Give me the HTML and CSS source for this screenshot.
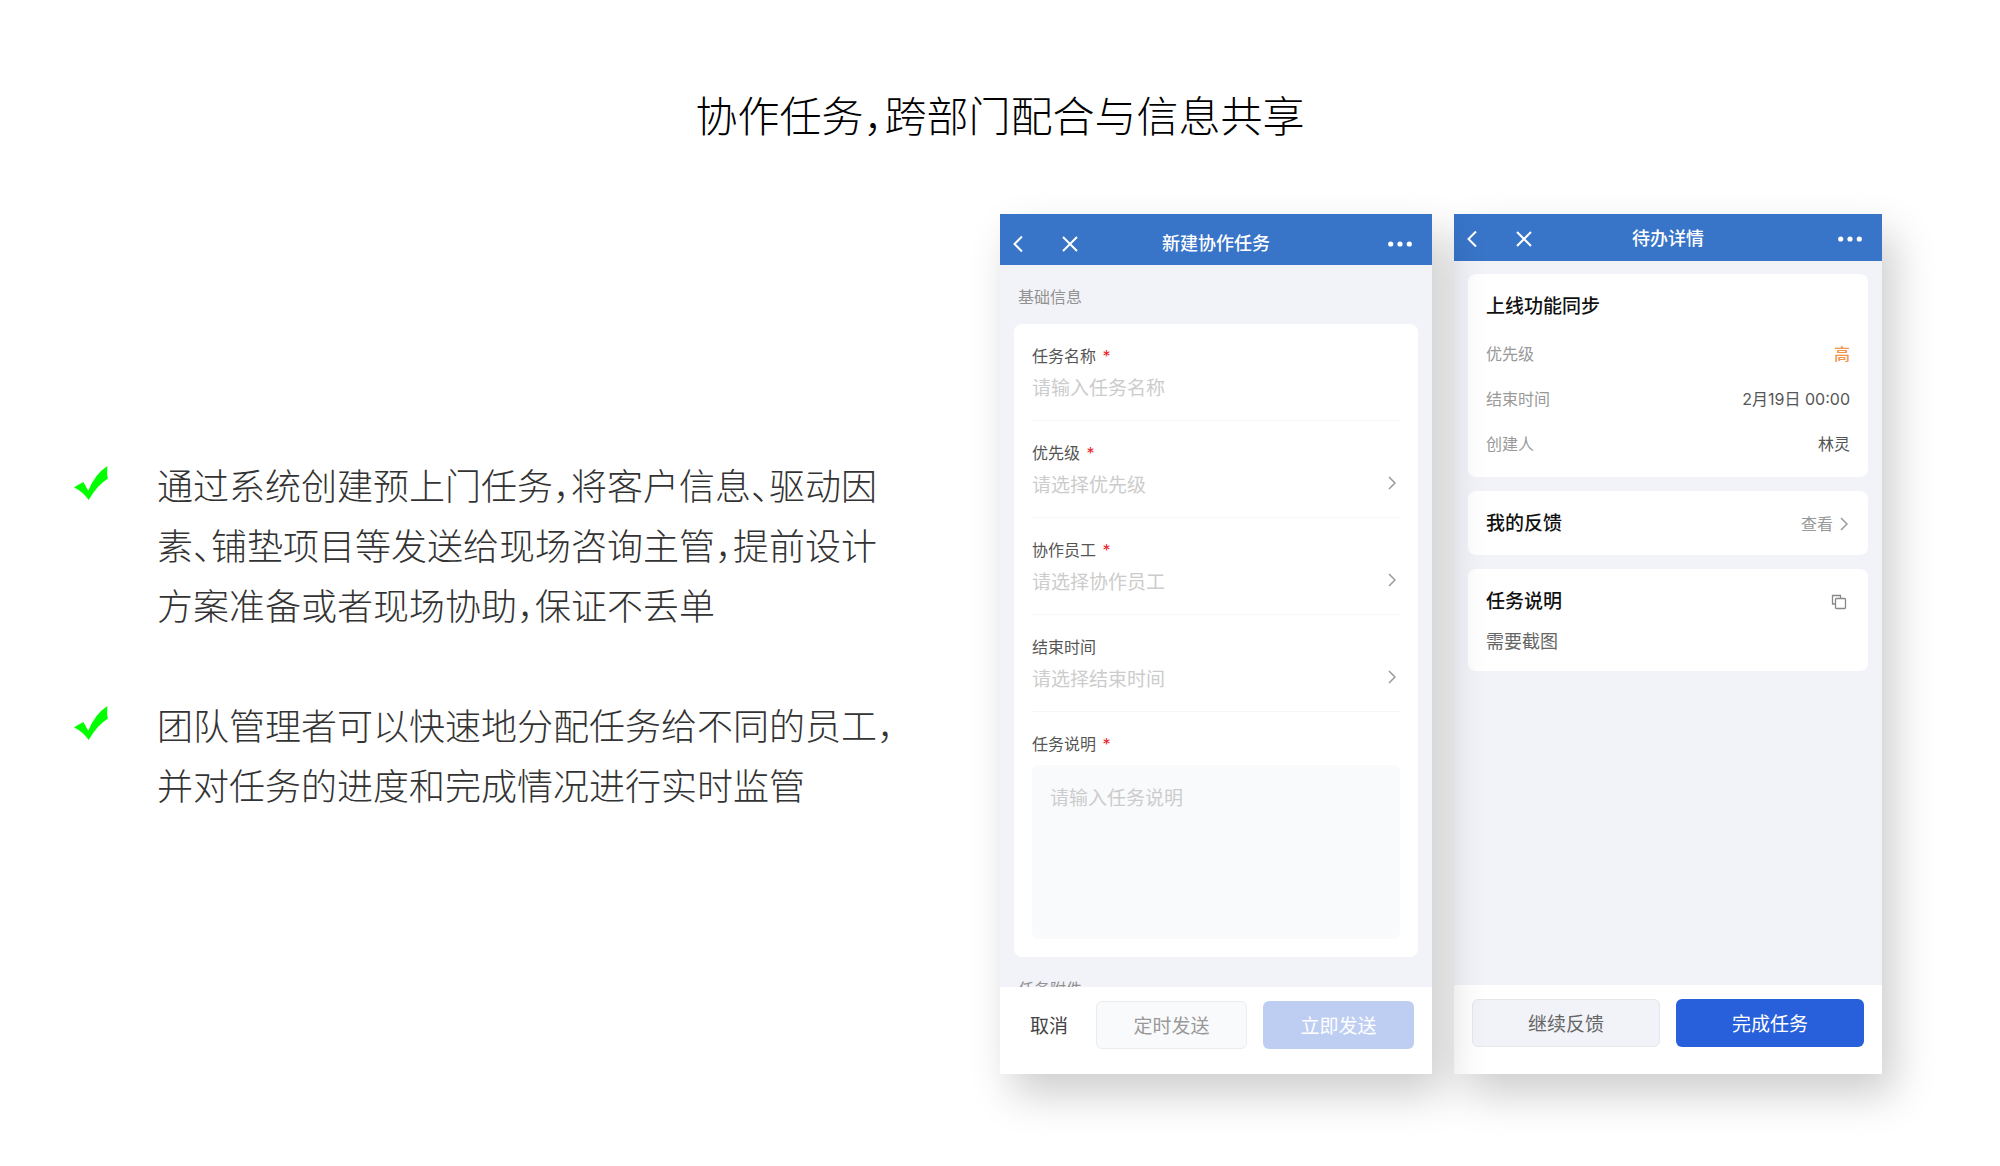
FILE: index.html
```html
<!DOCTYPE html>
<html lang="zh-CN">
<head>
    <meta charset="UTF-8">
    <title>协作任务</title>
    <meta name="viewport" content="width=device-width, initial-scale=1.0">
    <link rel="stylesheet" href="styles.css">
</head>
<body>

<h1 class="page-title">协作任务，跨部门配合与信息共享</h1>

<main class="content">
    <ul class="features">
        <li class="feature">
            <svg class="check" viewBox="0 0 34 34" aria-hidden="true"><path d="M0 21.300L9.300 16L14.300 24.700Q21 8 33.500 0Q32.500 7 33.800 12.700Q23 19 14.700 34Q9 26 0 21.300Z"/></svg>
            <p>通过系统创建预上门任务，将客户信息、驱动因素、铺垫项目等发送给现场咨询主管，提前设计方案准备或者现场协助，保证不丢单</p>
        </li>
        <li class="feature">
            <svg class="check" viewBox="0 0 34 34" aria-hidden="true"><path d="M0 21.300L9.300 16L14.300 24.700Q21 8 33.500 0Q32.500 7 33.800 12.700Q23 19 14.700 34Q9 26 0 21.300Z"/></svg>
            <p>团队管理者可以快速地分配任务给不同的员工，并对任务的进度和完成情况进行实时监管</p>
        </li>
    </ul>

    <div class="phones">
        <!-- New task form -->
        <form class="phone phone-front" action="#">
            <header class="navbar navbar-tall">
                <div class="nav-left">
                    <button type="button" class="icon-button" aria-label="返回"><svg width="10" height="18" viewBox="0 0 10 18"><path d="M9 1.500L1.500 9L9 16.500"/></svg></button>
                    <button type="button" class="icon-button" aria-label="关闭"><svg width="16" height="16" viewBox="0 0 16 16"><path d="M1 1L15 15M15 1L1 15"/></svg></button>
                </div>
                <h2 class="nav-title">新建协作任务</h2>
                <button type="button" class="icon-button nav-more" aria-label="更多"><svg class="dots" width="24" height="6" viewBox="0 0 24 6"><circle cx="2.700" cy="3" r="2.600"/><circle cx="12" cy="3" r="2.600"/><circle cx="21.300" cy="3" r="2.600"/></svg></button>
            </header>

            <div class="screen">
                <h3 class="section-label">基础信息</h3>
                <div class="card form-card">
                    <div class="field">
                        <label for="taskName">任务名称 <span class="required">*</span></label>
                        <input type="text" id="taskName" placeholder="请输入任务名称">
                    </div>
                    <div class="field">
                        <label for="priority">优先级 <span class="required">*</span></label>
                        <div class="picker">
                            <select id="priority"><option>请选择优先级</option></select>
                            <svg class="chevron" viewBox="0 0 8 14"><path d="M1 1L7 7L1 13"/></svg>
                        </div>
                    </div>
                    <div class="field">
                        <label for="staff">协作员工 <span class="required">*</span></label>
                        <div class="picker">
                            <select id="staff"><option>请选择协作员工</option></select>
                            <svg class="chevron" viewBox="0 0 8 14"><path d="M1 1L7 7L1 13"/></svg>
                        </div>
                    </div>
                    <div class="field">
                        <label for="endTime">结束时间</label>
                        <div class="picker">
                            <input type="text" id="endTime" placeholder="请选择结束时间" readonly>
                            <svg class="chevron" viewBox="0 0 8 14"><path d="M1 1L7 7L1 13"/></svg>
                        </div>
                    </div>
                    <div class="field field-note">
                        <label for="taskNote">任务说明 <span class="required">*</span></label>
                        <textarea id="taskNote" placeholder="请输入任务说明"></textarea>
                    </div>
                </div>
                <h3 class="section-label">任务附件</h3>
            </div>

            <footer class="actions actions-three">
                <button type="button" class="btn btn-text">取消</button>
                <button type="button" class="btn btn-light">定时发送</button>
                <button type="button" class="btn btn-pale">立即发送</button>
            </footer>
        </form>

        <!-- Task detail -->
        <section class="phone">
            <header class="navbar">
                <div class="nav-left">
                    <button type="button" class="icon-button" aria-label="返回"><svg width="10" height="18" viewBox="0 0 10 18"><path d="M9 1.500L1.500 9L9 16.500"/></svg></button>
                    <button type="button" class="icon-button" aria-label="关闭"><svg width="16" height="16" viewBox="0 0 16 16"><path d="M1 1L15 15M15 1L1 15"/></svg></button>
                </div>
                <h2 class="nav-title">待办详情</h2>
                <button type="button" class="icon-button nav-more" aria-label="更多"><svg class="dots" width="24" height="6" viewBox="0 0 24 6"><circle cx="2.700" cy="3" r="2.600"/><circle cx="12" cy="3" r="2.600"/><circle cx="21.300" cy="3" r="2.600"/></svg></button>
            </header>

            <div class="screen screen-cards">
                <div class="card">
                    <h3 class="card-title">上线功能同步</h3>
                    <dl class="details">
                        <div class="detail"><dt>优先级</dt><dd class="high">高</dd></div>
                        <div class="detail"><dt>结束时间</dt><dd>2月19日 00:00</dd></div>
                        <div class="detail"><dt>创建人</dt><dd>林灵</dd></div>
                    </dl>
                </div>
                <div class="card card-head">
                    <h3 class="card-title">我的反馈</h3>
                    <a class="view-link" href="#">查看 <svg class="chevron" viewBox="0 0 8 14"><path d="M1 1L7 7L1 13"/></svg></a>
                </div>
                <div class="card">
                    <div class="card-head">
                        <h3 class="card-title">任务说明</h3>
                        <button type="button" class="icon-button copy" aria-label="复制"><svg width="16" height="16" viewBox="0 0 16 16"><path d="M4 10H1.500V1.500H9.500V4"/><rect x="4.500" y="4.500" width="10" height="10" rx="1"/></svg></button>
                    </div>
                    <p class="note">需要截图</p>
                </div>
            </div>

            <footer class="actions">
                <button type="button" class="btn btn-gray">继续反馈</button>
                <button type="button" class="btn btn-primary">完成任务</button>
            </footer>
        </section>
    </div>
</main>

</body>
</html>
```
FILE: styles.css
```css
* {
    box-sizing: border-box;
}
body {
    margin: 0;
    padding: 84px 0 92px;
    background: #fff;
    color: #333;
    font-family: Inter, "Noto Sans CJK SC", sans-serif;
}
h1, h2, h3, p, ul, dl, dd {
    margin: 0;
    padding: 0;
}
button, input, select, textarea {
    font-family: inherit;
}
.page-title {
    font-family: "Noto Sans CJK SC", sans-serif;
    font-size: 42px;
    font-weight: 300;
    line-height: 60px;
    color: #000;
    text-align: center;
    font-feature-settings: "halt";
}
.content {
    display: grid;
    grid-template-columns: 1fr 1fr;
    align-items: center;
    margin-top: 70px;
}

/* Feature list */
.features {
    list-style: none;
    display: flex;
    flex-direction: column;
    gap: 60px;
    padding: 0 100px 20px 74px;
}
.feature {
    display: flex;
    align-items: flex-start;
    gap: 49px;
    font-family: "Noto Sans CJK SC", sans-serif;
    font-size: 36px;
    font-weight: 300;
    line-height: 60px;
    font-feature-settings: "halt";
}
.check {
    flex: none;
    width: 34px;
    height: 34px;
    margin-top: 12px;
    fill: #00ff00;
}

/* Phones */
.phones {
    display: grid;
    grid-template-columns: 432fr 428fr;
    gap: 22px;
    padding-right: 118px;
}
.phone {
    display: flex;
    flex-direction: column;
    background: #f2f3f8;
    box-shadow: 12px 20px 40px rgba(0, 0, 0, 0.2);
}
.phone-front {
    position: relative;
    z-index: 1;
    aspect-ratio: 432 / 860;
}
.navbar {
    display: grid;
    grid-template-columns: 1fr auto 1fr;
    align-items: center;
    padding: 3px 13px 0;
    height: 47px;
    background: #3874c8;
    color: #fff;
}
.navbar-tall {
    padding-top: 8px;
    height: 51px;
}
.nav-left {
    display: flex;
    align-items: center;
    gap: 39px;
}
.nav-title {
    font-size: 18px;
    font-weight: 500;
    line-height: 24px;
}
.icon-button {
    display: flex;
    padding: 0;
    border: none;
    background: none;
    color: inherit;
    cursor: pointer;
}
.icon-button svg {
    fill: none;
    stroke: currentColor;
    stroke-width: 2;
}
.icon-button .dots {
    fill: currentColor;
    stroke: none;
}
.nav-more {
    justify-self: end;
    margin-right: 7px;
}
.screen {
    flex: 1;
    min-height: 0;
    overflow: hidden;
    padding: 0 14px;
}
.screen-cards {
    display: flex;
    flex-direction: column;
    gap: 14px;
    padding-top: 13px;
}
.section-label {
    padding: 20px 4px 15px;
    font-size: 16px;
    font-weight: 400;
    line-height: 24px;
    color: #929292;
}
.card {
    padding: 19px 18px 17px;
    background: #fff;
    border-radius: 8px;
}

/* Form */
.form-card {
    padding: 0 18px;
}
.field {
    display: flex;
    flex-direction: column;
    gap: 7px;
    padding: 20px 0 17px;
    border-bottom: 1px solid #f7f7f8;
}
.field-note {
    gap: 9px;
    padding-bottom: 18px;
    border-bottom: none;
}
.field label {
    font-size: 16px;
    line-height: 24px;
    color: #555;
}
.required {
    margin-left: 2px;
    color: #e8262b;
}
.field input,
.field select,
.field textarea {
    width: 100%;
    padding: 0;
    border: none;
    outline: none;
    background: transparent;
    font-size: 19px;
    line-height: 28px;
    color: #ccc;
}
.field input,
.field select {
    height: 28px;
    appearance: none;
}
.field textarea {
    display: block;
    height: 174px;
    padding: 20px 18px;
    resize: none;
    background: #f9fafc;
    border-radius: 6px;
}
::placeholder {
    color: #ccc;
}
.picker {
    display: flex;
    align-items: flex-start;
    padding-right: 4px;
}
.picker .chevron {
    margin-top: 4px;
}
.chevron {
    flex: none;
    width: 8px;
    height: 14px;
    fill: none;
    stroke: #999;
    stroke-width: 1.500;
}

/* Detail cards */
.card-title {
    font-size: 19px;
    font-weight: 500;
    line-height: 28px;
    color: #111;
}
.card-head {
    display: flex;
    justify-content: space-between;
    align-items: center;
}
.details {
    display: flex;
    flex-direction: column;
    gap: 21px;
    padding: 21px 0 4px;
}
.detail {
    display: flex;
    justify-content: space-between;
    font-size: 16px;
    line-height: 24px;
    color: #999;
}
.detail dd {
    color: #555;
}
.detail .high {
    font-weight: 500;
    color: #f0934a;
}
.view-link {
    display: flex;
    align-items: center;
    gap: 7px;
    padding-right: 2px;
    font-size: 16px;
    line-height: 24px;
    color: #999;
    text-decoration: none;
}
.copy {
    margin-right: 3px;
    color: #888;
}
.copy svg {
    stroke-width: 1.300;
}
.note {
    margin-top: 14px;
    font-size: 18px;
    line-height: 24px;
    color: #666;
}

/* Bottom buttons */
.actions {
    display: grid;
    grid-template-columns: 1fr 1fr;
    gap: 16px;
    padding: 14px 18px 27px;
    background: #fff;
}
.actions-three {
    grid-template-columns: 62px 1fr 1fr;
    padding-bottom: 25px;
}
.btn {
    height: 48px;
    padding: 0 0 2px;
    border: 1px solid transparent;
    border-radius: 6px;
    background: transparent;
    font-size: 19px;
    cursor: pointer;
}
.btn-text {
    color: #444;
}
.btn-light {
    background: #f9fafc;
    border-color: #ececee;
    color: #999;
}
.btn-pale {
    background: #becef3;
    color: #fff;
}
.btn-gray {
    background: #f2f3f8;
    border-color: #e6e7ea;
    color: #666;
}
.btn-primary {
    background: #2860dc;
    color: #fff;
}
```
